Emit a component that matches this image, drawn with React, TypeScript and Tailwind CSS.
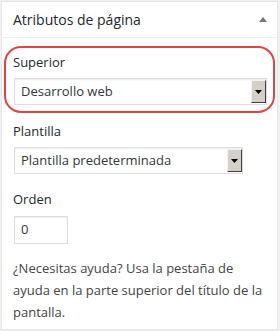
import React from "react";

function Select({ value, width }: { value: string; width: string }) {
  return (
    <div className={`ml-px flex h-[27px] ${width} items-stretch border border-[#dddddd] bg-white shadow-[inset_0_1px_2px_rgba(0,0,0,0.07)]`}>
      <div className="flex flex-1 items-center pl-[6px] text-[13px] text-[#32373c]">{value}</div>
      <div className="my-px flex w-[15px] items-center justify-center border-t border-l border-t-[#f4f3ef] border-l-[#f4f3ef] border-r border-b border-r-[#404040] border-b-[#404040] bg-[#d4d0c8]">
        <svg width="7" height="4" viewBox="0 0 7 4"><path d="M0 0h7L3.5 4z" fill="#000" /></svg>
      </div>
    </div>
  );
}

export default function App() {
  return (
    <div className="h-[331px] w-[280px] bg-[#f1f1f1] pl-px pt-px" style={{ fontFamily: '"Open Sans", "Noto Sans", sans-serif' }}>
      <div className="h-[329px] w-[277px] border border-[#e5e5e5] bg-white">
        <div className="flex h-[36px] items-center justify-between border-b border-[#eeeeee] pl-[11px] pr-[10px]">
          <span className="text-[14px] text-[#23282d]">Atributos de página</span>
          <svg width="8" height="5" viewBox="0 0 8 5"><path d="M0 5L4 0l4 5z" fill="#72777c" /></svg>
        </div>
        <div className="pl-[11px] pr-[10px] pt-[8px]">
          <div className="-ml-[9px] -mr-[8px] rounded-[17px] border-2 border-[#e24444] pl-[7px] pr-[6px] pb-[6px] pt-[3px]">
            <div className="mb-[5px] text-[13px] leading-[22px] text-[#23282d]">Superior</div>
            <Select value="Desarrollo web" width="w-[253px]" />
          </div>
          <div className="mt-[7px] mb-[5px] text-[13px] leading-[22px] text-[#23282d]">Plantilla</div>
          <Select value="Plantilla predeterminada" width="w-[229px]" />
          <div className="mt-[14px] mb-[6px] text-[13px] leading-[22px] text-[#23282d]">Orden</div>
          <div className="ml-px flex h-[28px] w-[54px] items-center border border-[#dddddd] pl-[6px] text-[13px] text-[#32373c] shadow-[inset_0_1px_2px_rgba(0,0,0,0.07)]">0</div>
          <p className="mt-[13px] text-[13px] leading-[22px] text-[#444444]">
            ¿Necesitas ayuda? Usa la pestaña de ayuda en la parte superior del título de la pantalla.
          </p>
        </div>
      </div>
    </div>
  );
}
